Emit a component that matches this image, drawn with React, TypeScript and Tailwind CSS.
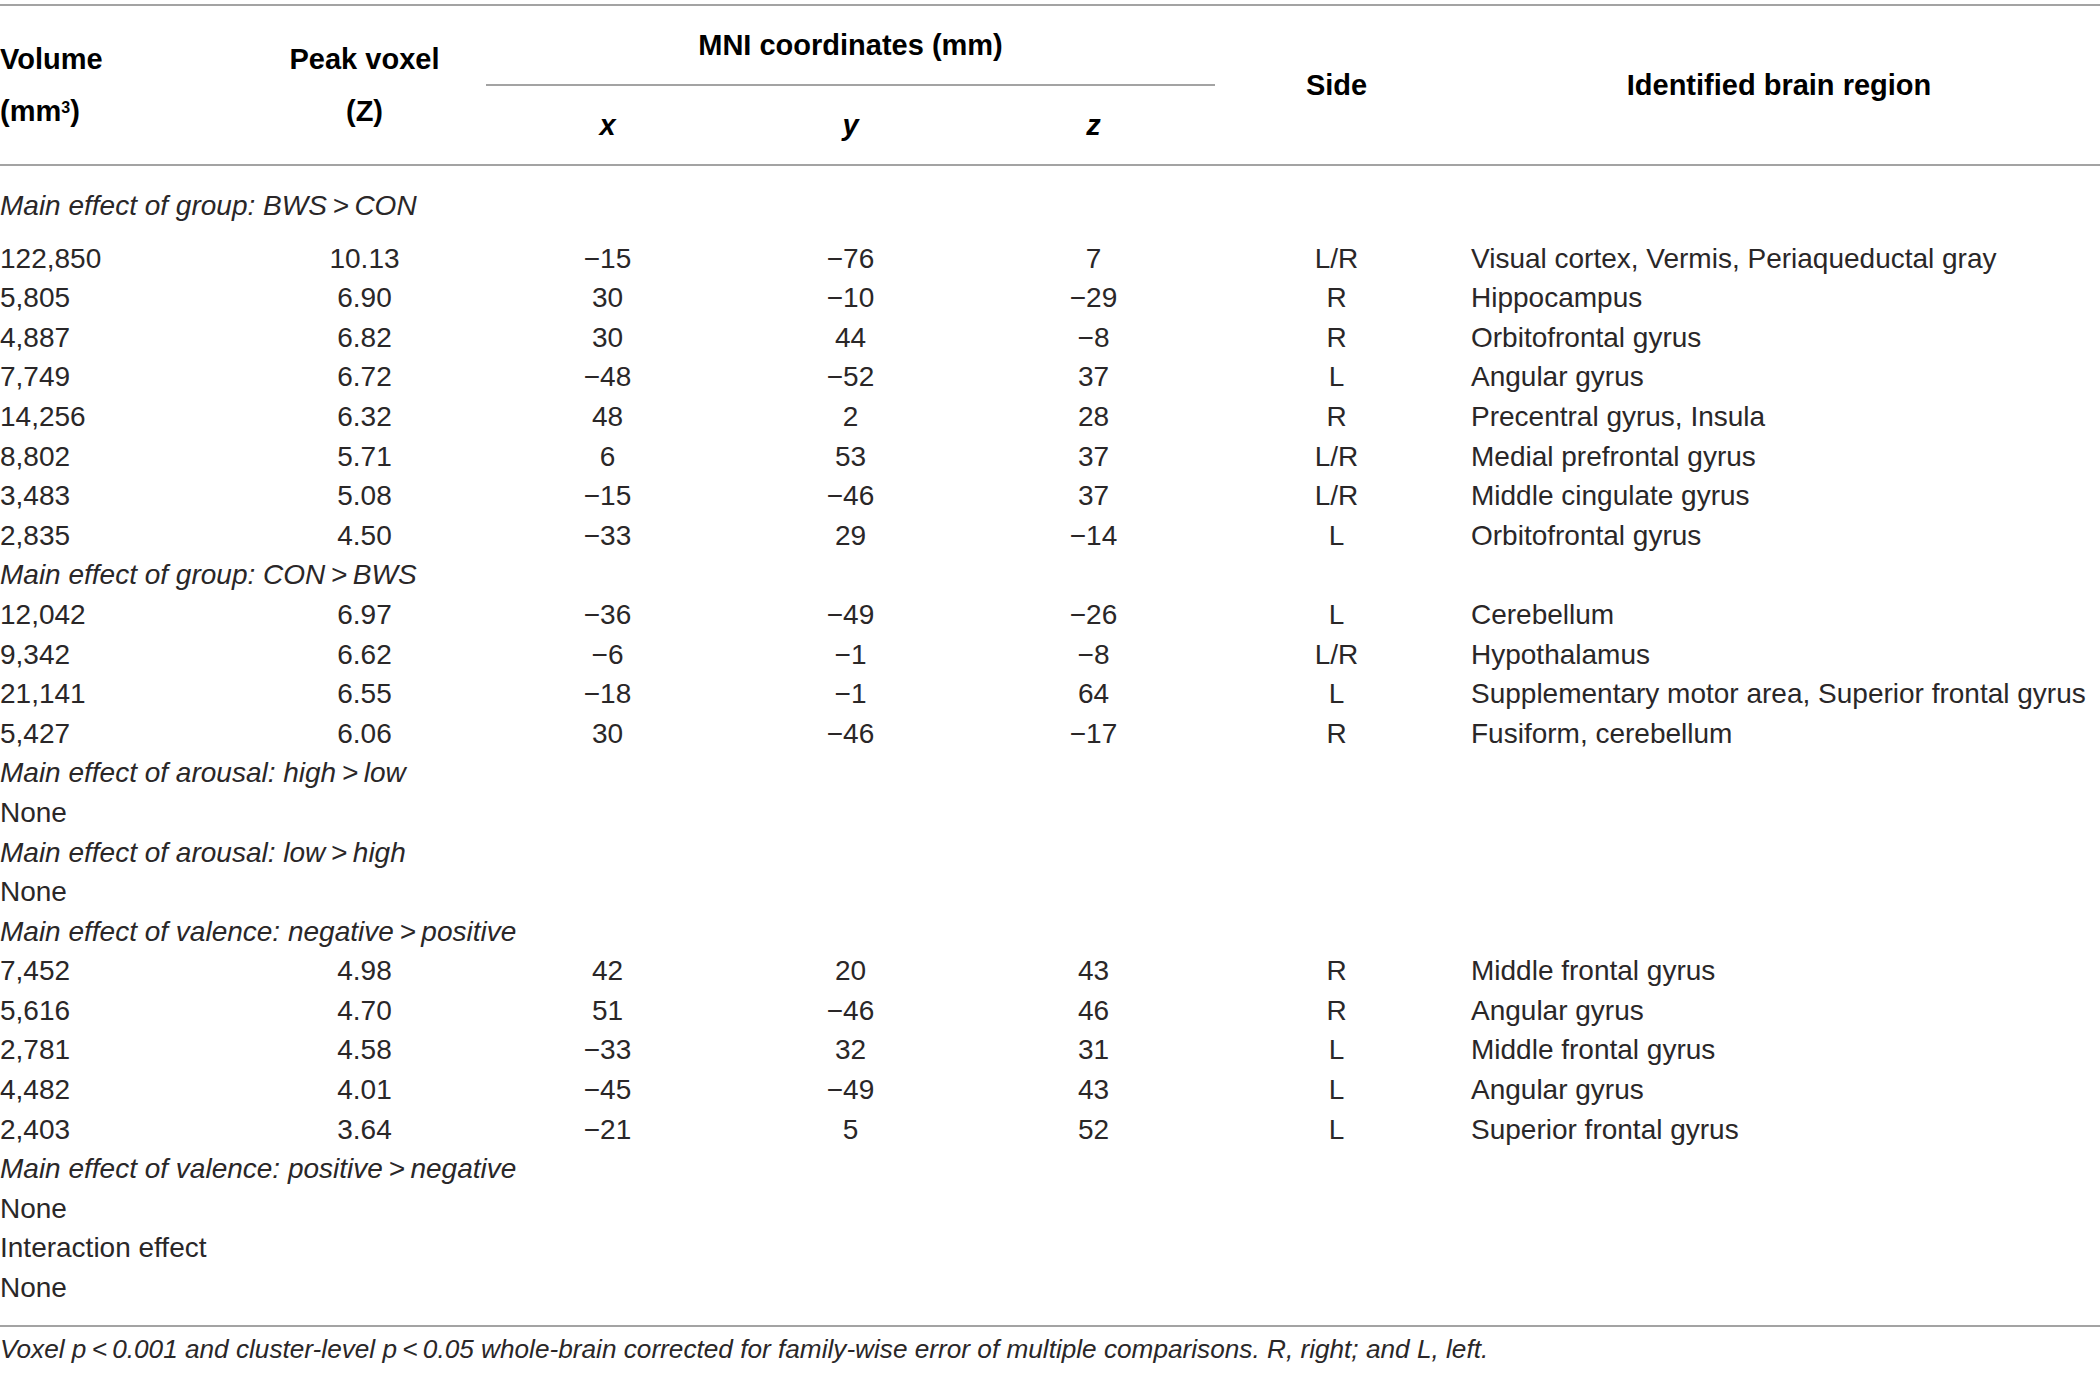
import React from 'react'

type DataRow = [string, string, string, string, string, string, string]
type Row = DataRow | { text: string; italic?: boolean }

const M = '\u2212'
const T = '\u2009'

const rows: Row[] = [
    { text: `Main effect of group: BWS${T}>${T}CON`, italic: true },
    ['122,850', '10.13', `${M}15`, `${M}76`, '7', 'L/R', 'Visual cortex, Vermis, Periaqueductal gray'],
    ['5,805', '6.90', '30', `${M}10`, `${M}29`, 'R', 'Hippocampus'],
    ['4,887', '6.82', '30', '44', `${M}8`, 'R', 'Orbitofrontal gyrus'],
    ['7,749', '6.72', `${M}48`, `${M}52`, '37', 'L', 'Angular gyrus'],
    ['14,256', '6.32', '48', '2', '28', 'R', 'Precentral gyrus, Insula'],
    ['8,802', '5.71', '6', '53', '37', 'L/R', 'Medial prefrontal gyrus'],
    ['3,483', '5.08', `${M}15`, `${M}46`, '37', 'L/R', 'Middle cingulate gyrus'],
    ['2,835', '4.50', `${M}33`, '29', `${M}14`, 'L', 'Orbitofrontal gyrus'],
    { text: `Main effect of group: CON${T}>${T}BWS`, italic: true },
    ['12,042', '6.97', `${M}36`, `${M}49`, `${M}26`, 'L', 'Cerebellum'],
    ['9,342', '6.62', `${M}6`, `${M}1`, `${M}8`, 'L/R', 'Hypothalamus'],
    ['21,141', '6.55', `${M}18`, `${M}1`, '64', 'L', 'Supplementary motor area, Superior frontal gyrus'],
    ['5,427', '6.06', '30', `${M}46`, `${M}17`, 'R', 'Fusiform, cerebellum'],
    { text: `Main effect of arousal: high${T}>${T}low`, italic: true },
    { text: 'None' },
    { text: `Main effect of arousal: low${T}>${T}high`, italic: true },
    { text: 'None' },
    { text: `Main effect of valence: negative${T}>${T}positive`, italic: true },
    ['7,452', '4.98', '42', '20', '43', 'R', 'Middle frontal gyrus'],
    ['5,616', '4.70', '51', `${M}46`, '46', 'R', 'Angular gyrus'],
    ['2,781', '4.58', `${M}33`, '32', '31', 'L', 'Middle frontal gyrus'],
    ['4,482', '4.01', `${M}45`, `${M}49`, '43', 'L', 'Angular gyrus'],
    ['2,403', '3.64', `${M}21`, '5', '52', 'L', 'Superior frontal gyrus'],
    { text: `Main effect of valence: positive${T}>${T}negative`, italic: true },
    { text: 'None' },
    { text: 'Interaction effect' },
    { text: 'None' },
]

const cols = 'grid grid-cols-[243px_243px_243px_243px_243px_243px_1fr]'

function Rule() {
    return <div className="h-[2px] bg-[#a3a3a3]" />
}

export default function App() {
    return (
        <div
            className="w-[2100px] h-[1377px] bg-white text-[#2a2728] overflow-hidden"
            style={{ fontFamily: '"Liberation Sans", Arial, sans-serif' }}
        >
            <div className="pt-[4px]">
                <Rule />
                {/* header */}
                <div className={`${cols} h-[158px] text-[29px] font-bold text-black`}>
                    <div className="flex flex-col justify-center leading-[52px]">
                        <span>Volume</span>
                        <span>
                            (mm<sup className="text-[16px]">3</sup>)
                        </span>
                    </div>
                    <div className="flex flex-col justify-center items-center leading-[52px]">
                        <span>Peak voxel</span>
                        <span>(Z)</span>
                    </div>
                    <div className="col-span-3 flex flex-col">
                        <div className="h-[78px] flex items-center justify-center leading-[32px]">
                            MNI coordinates (mm)
                        </div>
                        <Rule />
                        <div className="grid grid-cols-3 h-[78px] items-center text-center leading-[32px] italic">
                            <span>x</span>
                            <span>y</span>
                            <span>z</span>
                        </div>
                    </div>
                    <div className="flex items-center justify-center leading-[32px]">Side</div>
                    <div className="flex items-center justify-center leading-[32px]">Identified brain region</div>
                </div>
                <Rule />

                {/* body */}
                <div className="pt-[20px] pb-[17px] text-[28px] leading-[39.6px]">
                    {rows.map((r, i) =>
                        Array.isArray(r) ? (
                            <div key={i} className={`${cols} h-[39.6px]`}>
                                <span>{r[0]}</span>
                                <span className="text-center">{r[1]}</span>
                                <span className="text-center">{r[2]}</span>
                                <span className="text-center">{r[3]}</span>
                                <span className="text-center">{r[4]}</span>
                                <span className="text-center">{r[5]}</span>
                                <span className="pl-[13px] whitespace-nowrap">{r[6]}</span>
                            </div>
                        ) : (
                            <div
                                key={i}
                                className={`h-[39.6px] whitespace-nowrap ${r.italic ? 'italic' : ''} ${i === 0 ? 'mb-[13px]' : ''}`}
                            >
                                {r.text}
                            </div>
                        )
                    )}
                </div>
                <Rule />
                <p className="mt-[4px] text-[26.2px] leading-[36px] italic whitespace-nowrap">
                    Voxel p{T}&lt;{T}0.001 and cluster-level p{T}&lt;{T}0.05 whole-brain corrected for family-wise error of
                    multiple comparisons. R, right; and L, left.
                </p>
            </div>
        </div>
    )
}
